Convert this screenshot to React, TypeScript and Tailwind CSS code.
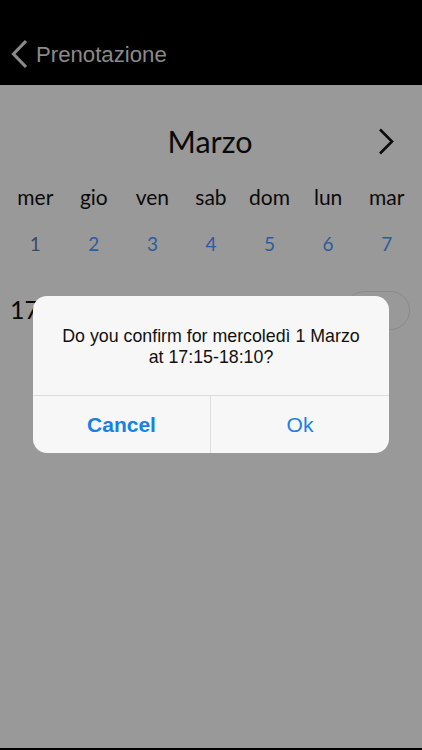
const days = ['mer', 'gio', 'ven', 'sab', 'dom', 'lun', 'mar'];
const dates = [1, 2, 3, 4, 5, 6, 7];

const App = () => {
    return (
        <div className="relative w-[422px] h-[750px] flex flex-col bg-[#999999] overflow-hidden font-['Lato',sans-serif]">
            {/* Header */}
            <header className="h-[85px] bg-black flex items-end pb-[14px] pl-[10px] shrink-0">
                <div className="flex items-center gap-[7px] text-[#8a8a8a]">
                    <svg width="19" height="30" viewBox="0 0 19 30" fill="none" stroke="currentColor" strokeWidth="3.2" strokeLinecap="butt" strokeLinejoin="miter">
                        <polyline points="16,2 3.5,15 16,28" />
                    </svg>
                    <span className="text-[22.2px] font-['Liberation_Sans',sans-serif]">Prenotazione</span>
                </div>
            </header>

            {/* Calendar */}
            <div className="flex-1 flex flex-col">
                <div className="relative h-[60px] mt-[27px] flex items-center justify-center">
                    <span className="text-[30.5px] text-[#0a0a0a] -ml-[2px]">Marzo</span>
                    <svg className="absolute left-[377px] top-[16px] text-[#0a0a0a]" width="20" height="28" viewBox="0 0 20 28" fill="none" stroke="currentColor" strokeWidth="2.6" strokeLinejoin="miter">
                        <polyline points="3,1.5 15,13.5 3,25.5" />
                    </svg>
                </div>
                <div className="grid grid-cols-7 px-[6px] mt-[10px]">
                    {days.map((d) => (
                        <div key={d} className="text-center text-[21px] text-[#0a0a0a] h-[30px] leading-[30px]">{d}</div>
                    ))}
                </div>
                <div className="grid grid-cols-7 px-[6px] mt-[17px]">
                    {dates.map((n, i) => (
                        <div key={n} className={`text-center text-[19px] h-[30px] leading-[30px] ${i === 0 ? 'text-[#3a4a66]' : 'text-[#2d5c9e]'}`}>{n}</div>
                    ))}
                </div>
                <div className="flex items-center justify-between pl-[10px] pr-[12px] mt-[31px] h-[40px]">
                    <span className="text-[25px] text-[#0a0a0a]">17:15 - 18:10</span>
                    <div className="w-[65px] h-[39px] rounded-full border-[1.5px] border-[#8a8a8a]" />
                </div>
            </div>
            <div className="h-[2px] bg-black shrink-0" />

            {/* Dialog */}
            <div className="absolute left-[33px] top-[296px] w-[356px] h-[157px] bg-[#f7f7f7] rounded-[14px] flex flex-col font-['Liberation_Sans',sans-serif]">
                <div className="flex-1 flex items-center justify-center text-center text-[17.8px] leading-[21px] text-[#111] px-2 pt-[2px]">
                    Do you confirm for mercoledì 1 Marzo<br />at 17:15-18:10?
                </div>
                <div className="h-[58px] border-t border-[#dcdcdc] grid grid-cols-2 shrink-0">
                    <button className="text-[21px] font-bold text-[#1a7fe6] border-r border-[#dcdcdc]">Cancel</button>
                    <button className="text-[21px] text-[#1a7fe6]">Ok</button>
                </div>
            </div>
        </div>
    );
};

export default App;
